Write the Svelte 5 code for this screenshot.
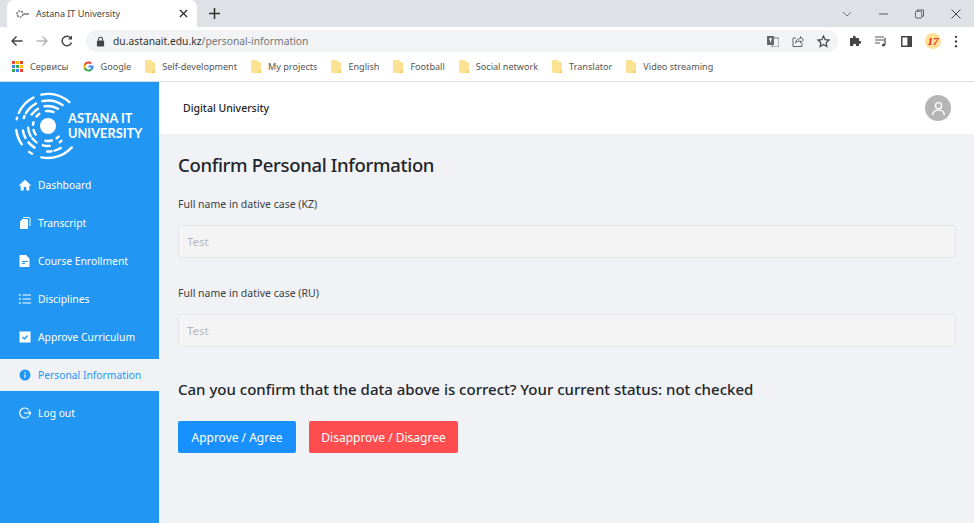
<script lang="ts">
	const bookmarks = ['Self-development', 'My projects', 'English', 'Football', 'Social network', 'Translator', 'Video streaming'];

	const nav = [
		{ label: 'Dashboard', icon: 'home' },
		{ label: 'Transcript', icon: 'copy' },
		{ label: 'Course Enrollment', icon: 'file' },
		{ label: 'Disciplines', icon: 'list' },
		{ label: 'Approve Curriculum', icon: 'check' },
		{ label: 'Personal Information', icon: 'info', active: true },
		{ label: 'Log out', icon: 'logout' }
	];

	const appsColors = ['#ea4335', '#fbbc04', '#ea4335', '#4285f4', '#34a853', '#fbbc04', '#34a853', '#4285f4', '#ea4335'];

	// logo arcs: radius, from, to (degrees clockwise from north)
	const logoArcs = [
		[32, -12, 42], [32, -66, -27], [32, -78, -75], [32, -125, -97], [32, -150, -144], [32, 132, 192],
		[25.5, -13, 35], [25.5, -60, -28], [25.5, -72, -67], [25.5, -118, -100], [25.5, -148, -130], [25.5, 150, 165], [25.5, 172, 182],
		[20, -10, 30], [20, -55, -30], [20, -120, -95], [20, -145, -128], [20, 138, 144], [20, 175, 195],
		[15, -8, 22], [15, -50, -35], [15, -85, -75], [15, -125, -105], [15, 135, 145], [15, 165, 190]
	];

	function arcPath(r: number, from: number, to: number) {
		const pt = (a: number) => {
			const t = (a * Math.PI) / 180;
			return `${(33 + r * Math.sin(t)).toFixed(2)} ${(35 - r * Math.cos(t)).toFixed(2)}`;
		};
		return `M${pt(from)}A${r} ${r} 0 0 1 ${pt(to)}`;
	}
</script>

<div class="window">
	<div class="tabstrip">
		<div class="tab">
			<svg class="favicon" viewBox="0 0 14 10" width="14" height="10"><circle cx="4" cy="5" r="3" fill="none" stroke="#777" stroke-width="1.6" stroke-dasharray="2 1"/><rect x="8" y="4" width="5" height="2" fill="#999"/></svg>
			<span class="tab-title">Astana IT University</span>
			<svg class="tab-close" viewBox="0 0 10 10" width="9" height="9"><path d="M1 1l8 8M9 1l-8 8" stroke="#333" stroke-width="1.5"/></svg>
		</div>
		<svg class="new-tab" viewBox="0 0 12 12" width="11" height="11"><path d="M6 0v12M0 6h12" stroke="#333" stroke-width="1.7"/></svg>
		<div class="win-controls">
			<svg viewBox="0 0 10 6" width="10" height="6"><path d="M1 1l4 4 4-4" fill="none" stroke="#777"/></svg>
			<svg viewBox="0 0 10 2" width="9" height="2"><path d="M0 1h10" stroke="#666" stroke-width="1.2"/></svg>
			<svg viewBox="0 0 10 10" width="9" height="10"><rect x="0.5" y="2" width="7" height="7.500" rx="1" fill="none" stroke="#555"/><path d="M2.500 2V.5h7v7H8" fill="none" stroke="#555"/></svg>
			<svg viewBox="0 0 10 10" width="10" height="10"><path d="M.5.5l9 9M9.500.5l-9 9" stroke="#444"/></svg>
		</div>
	</div>

	<div class="toolbar">
		<svg viewBox="0 0 12 12" width="12" height="12"><path d="M11.500 6H1M5.500 1.500L1 6l4.500 4.500" fill="none" stroke="#444" stroke-width="1.500"/></svg>
		<svg viewBox="0 0 12 12" width="12" height="12"><path d="M.5 6H11M6.500 1.500L11 6l-4.500 4.500" fill="none" stroke="#b4b6b9" stroke-width="1.500"/></svg>
		<svg viewBox="0 0 12 12" width="12" height="12"><path d="M10.500 7.500A4.800 4.800 0 1 1 9.600 2.800" fill="none" stroke="#444" stroke-width="1.500"/><path d="M11 .5v4H7z" fill="#444"/></svg>
		<div class="omnibox">
			<svg viewBox="0 0 10 12" width="9" height="11"><rect x="1" y="5" width="8" height="6.500" rx="1" fill="#444"/><path d="M2.800 5V3.500a2.200 2.200 0 0 1 4.400 0V5" fill="none" stroke="#444" stroke-width="1.200"/></svg>
			<span class="url">du.astanait.edu.kz<span class="path">/personal-information</span></span>
			<div class="omni-icons">
				<svg viewBox="0 0 12 12" width="12" height="12"><rect x="0" y="1" width="7" height="9" fill="#666"/><rect x="5" y="3" width="7" height="9" fill="none" stroke="#777"/><path d="M2 4h3M3.500 3v4" stroke="#fff"/></svg>
				<svg viewBox="0 0 12 12" width="12" height="12"><path d="M4 3H1v8.500h9V8" fill="none" stroke="#666"/><path d="M3.500 8c.5-3 2.500-4.500 5-4.500V1.500L11.500 5 8.500 8V6C6.500 6 5 6.500 3.500 8z" fill="none" stroke="#666"/></svg>
				<svg viewBox="0 0 12 12" width="13" height="13"><path d="M6 1l1.500 3.300 3.500.4-2.600 2.400.7 3.500L6 8.800l-3.100 1.800.7-3.500L1 4.700l3.500-.4z" fill="none" stroke="#444" stroke-width="1.100"/></svg>
			</div>
		</div>
		<div class="ext-icons">
			<svg viewBox="0 0 12 12" width="12" height="12"><path d="M1 3h3V2a1.300 1.300 0 0 1 2.700 0v1H10v3h1a1.300 1.300 0 0 1 0 2.700h-1V11H7V10a1.300 1.300 0 0 0-2.700 0v1H1z" fill="#444"/></svg>
			<svg viewBox="0 0 12 12" width="12" height="12"><path d="M0 2h9M0 5h9M0 8h5" stroke="#555" stroke-width="1.100"/><path d="M10 3v7" stroke="#444" stroke-width="1.200"/><circle cx="8.500" cy="10" r="1.500" fill="#444"/></svg>
			<svg viewBox="0 0 12 12" width="11" height="11"><rect x=".8" y=".8" width="10.400" height="10.400" fill="none" stroke="#444" stroke-width="1.600"/><rect x="7" y="1" width="4" height="10" fill="#444"/></svg>
			<span class="ext-badge">17</span>
			<svg viewBox="0 0 4 14" width="4" height="13"><circle cx="2" cy="2" r="1.300" fill="#444"/><circle cx="2" cy="7" r="1.300" fill="#444"/><circle cx="2" cy="12" r="1.300" fill="#444"/></svg>
		</div>
	</div>

	<div class="bookmarks">
		<span class="bm first">
			<span class="apps">{#each appsColors as c}<i style="background:{c}"></i>{/each}</span>
			Сервисы
		</span>
		<span class="bm">
			<svg viewBox="0 0 48 48" width="11" height="11"><path fill="#4285f4" d="M46 24c0-1.500-.1-3-.4-4.400H24v8.400h12.300c-.5 2.800-2.100 5.100-4.500 6.700v5.600h7.300C43.400 36.300 46 30.700 46 24z"/><path fill="#34a853" d="M24 46c6 0 11.100-2 14.800-5.400l-7.300-5.600c-2 1.400-4.600 2.200-7.500 2.200-5.800 0-10.700-3.900-12.400-9.100H4v5.800C7.700 41.100 15.300 46 24 46z"/><path fill="#fbbc04" d="M11.600 28.100c-.9-2.700-.9-5.500 0-8.200v-5.800H4c-3.100 6.200-3.100 13.600 0 19.800z"/><path fill="#ea4335" d="M24 10.800c3.200 0 6.100 1.100 8.400 3.300l6.300-6.300C34.900 4.200 29.800 2 24 2 15.300 2 7.700 6.900 4 14.100l7.600 5.800c1.700-5.200 6.600-9.100 12.400-9.100z"/></svg>
			Google
		</span>
		{#each bookmarks as b}
			<span class="bm">
				<svg class="folder" viewBox="0 0 10 13" width="10" height="13"><path d="M0 1a1 1 0 0 1 1-1h5l1 2h2a1 1 0 0 1 1 1v9a1 1 0 0 1-1 1H1a1 1 0 0 1-1-1z" fill="#fde293"/><path d="M7 13h2a1 1 0 0 0 1-1v-1H8z" fill="#f2c94c"/></svg>
				{b}
			</span>
		{/each}
	</div>

	<div class="app-body">
		<aside class="sidebar">
			<div class="logo">
				<svg class="logo-mark" viewBox="0 0 58 70" width="58" height="70">
					{#each logoArcs as [r, from, to]}
						<path d={arcPath(r, from, to)} fill="none" stroke="#fff" stroke-width="2.400" stroke-linecap="round" />
					{/each}
					<circle cx="33" cy="35" r="8" fill="#fff" />
				</svg>
				<div class="logo-text">ASTANA IT<br />UNIVERSITY</div>
			</div>
			<nav class="nav">
				{#each nav as item}
					<div class="nav-item" class:active={item.active}>
						<svg class="nav-icon" viewBox="0 0 12 12" width="12" height="12">
							{#if item.icon === 'home'}
								<path d="M6 .8L0 6.300l.7.700 1-.9V11.500h3V8h2.600v3.500h3V6.100l1 .9.700-.7z" fill="currentColor" />
							{:else if item.icon === 'copy'}
								<path d="M3.500 2h4.500a1 1 0 0 1 1 1v8a1 1 0 0 1-1 1H2a1 1 0 0 1-1-1V4.500z" fill="currentColor" />
								<path d="M4.500 1.200V.5h5.500a1 1 0 0 1 1 1v7.500" fill="none" stroke="currentColor" />
							{:else if item.icon === 'file'}
								<path fill-rule="evenodd" d="M1.500 0H7l3.500 3.500V11a1 1 0 0 1-1 1h-8a1 1 0 0 1-1-1V1a1 1 0 0 1 1-1zM3 6v1h6V6zM3 8v1h3V8z" fill="currentColor" />
							{:else if item.icon === 'list'}
								<path d="M3.500 2h8.500M3.500 6h8.500M3.500 10h8.500" stroke="currentColor" stroke-width="1" />
								<path d="M0 1.200h1.600v1.600H0zM0 5.200h1.600v1.600H0zM0 9.200h1.600v1.600H0z" fill="currentColor" />
							{:else if item.icon === 'check'}
								<rect x=".5" y=".5" width="11" height="11" fill="currentColor" />
								<path d="M3.500 6l2 2 3-3.500" fill="none" stroke="#2196f3" stroke-width="1.400" />
							{:else if item.icon === 'info'}
								<circle cx="6" cy="6" r="5.500" fill="currentColor" />
								<path d="M6 5.200v3.600M6 3v1.300" stroke="#f0f2f6" stroke-width="1.300" />
							{:else}
								<path d="M9.800 3A5 5 0 1 0 9.800 9" fill="none" stroke="currentColor" stroke-width="1.200" />
								<path d="M5 6h7M10 4l2 2-2 2" fill="none" stroke="currentColor" stroke-width="1.100" />
							{/if}
						</svg>
						<span>{item.label}</span>
					</div>
				{/each}
			</nav>
		</aside>

		<div class="page">
			<header class="topbar">
				<span class="brand">Digital University</span>
				<span class="avatar">
					<svg viewBox="0 0 16 16" width="15" height="15"><circle cx="8" cy="5" r="3.300" fill="none" stroke="#fff" stroke-width="1.500"/><path d="M1.800 15c0-3.500 2.800-5.300 6.200-5.300s6.200 1.800 6.200 5.300" fill="none" stroke="#fff" stroke-width="1.500"/></svg>
				</span>
			</header>
			<main class="content">
				<h1>Confirm Personal Information</h1>
				<label class="field">
					<span>Full name in dative case (KZ)</span>
					<input type="text" placeholder="Test" disabled />
				</label>
				<label class="field second">
					<span>Full name in dative case (RU)</span>
					<input type="text" placeholder="Test" disabled />
				</label>
				<h2>Can you confirm that the data above is correct? Your current status: not checked</h2>
				<div class="actions">
					<button class="btn approve">Approve / Agree</button>
					<button class="btn reject">Disapprove / Disagree</button>
				</div>
			</main>
		</div>
	</div>
</div>

<style>
	:global(body) {
		margin: 0;
		overflow: hidden;
	}

	.window {
		width: 974px;
		height: 523px;
		display: flex;
		flex-direction: column;
		font-family: "Noto Sans", "Open Sans", sans-serif;
		overflow: hidden;
		background: #fff;
	}

	.tabstrip {
		height: 27px;
		background: #dee1e6;
		display: flex;
		align-items: center;
		flex-shrink: 0;
	}

	.tab {
		width: 190px;
		height: 27px;
		margin-left: 7px;
		background: #fff;
		border-radius: 7px 7px 0 0;
		display: flex;
		align-items: center;
		box-sizing: border-box;
		padding: 0 9px 0 9px;
	}

	.favicon {
		margin-right: 6px;
	}

	.tab-title {
		font-size: 9px;
		color: #444;
		flex: 1;
	}

	.new-tab {
		margin-left: 12px;
	}

	.win-controls {
		margin-left: auto;
		display: flex;
		align-items: center;
		gap: 27px;
		padding-right: 13px;
	}

	.toolbar {
		height: 28px;
		display: flex;
		align-items: center;
		gap: 13px;
		padding-left: 11px;
		flex-shrink: 0;
	}

	.omnibox {
		width: 752px;
		height: 22px;
		border-radius: 11px;
		background: #f1f3f4;
		display: flex;
		align-items: center;
		padding-left: 10px;
		box-sizing: border-box;
		gap: 8px;
	}

	.url {
		font-size: 10.3px;
		color: #333;
	}

	.path {
		color: #777;
	}

	.omni-icons {
		margin-left: auto;
		display: flex;
		align-items: center;
		gap: 13px;
		padding-right: 8px;
	}

	.ext-icons {
		display: flex;
		align-items: center;
		gap: 14px;
		margin-left: -2px;
	}

	.ext-badge {
		width: 16px;
		height: 16px;
		border-radius: 50%;
		margin: 0 -1px;
		background: #fde293;
		color: #e8251b;
		font: italic bold 11px/16px "Liberation Serif", serif;
		text-align: center;
	}

	.bookmarks {
		height: 22px;
		padding: 0 0 4px 12px;
		display: flex;
		align-items: center;
		font-size: 9.1px;
		color: #555;
		gap: 14px;
		border-bottom: 1px solid #dadce0;
		flex-shrink: 0;
	}

	.bm {
		display: flex;
		align-items: center;
		gap: 7px;
		white-space: nowrap;
	}

	.apps {
		display: grid;
		grid-template-columns: repeat(3, 3px);
		gap: 1px;
	}

	.apps i {
		height: 3px;
		display: block;
	}

	.app-body {
		flex: 1;
		display: flex;
		min-height: 0;
	}

	.sidebar {
		width: 159px;
		background: #2196f3;
		color: #fff;
		flex-shrink: 0;
	}

	.logo {
		height: 87px;
		display: flex;
		align-items: center;
		padding-left: 15px;
	}

	.logo-mark {
		margin-right: -5px;
		overflow: visible;
	}

	.logo-text {
		font-family: Lato, sans-serif;
		font-weight: 700;
		font-size: 12.8px;
		line-height: 15px;
	}

	.nav {
		display: flex;
		flex-direction: column;
		gap: 6px;
	}

	.nav-item {
		height: 32px;
		display: flex;
		align-items: center;
		gap: 7px;
		padding-left: 19px;
		font-size: 10.3px;
		white-space: nowrap;
	}

	.nav-item.active {
		background: #f0f2f6;
		color: #2196f3;
	}

	.page {
		flex: 1;
		display: flex;
		flex-direction: column;
		background: #f0f2f6;
		min-width: 0;
	}

	.topbar {
		height: 52px;
		background: #fff;
		display: flex;
		align-items: center;
		justify-content: space-between;
		padding: 0 23px 0 24px;
		flex-shrink: 0;
	}

	.brand {
		font-size: 10.5px;
		font-weight: 500;
		color: #212529;
	}

	.avatar {
		width: 26px;
		height: 26px;
		border-radius: 50%;
		background: #b5b5b5;
		display: flex;
		align-items: center;
		justify-content: center;
	}

	.content {
		padding: 18px 18px 0 19px;
		color: #212529;
	}

	h1 {
		margin: 0 0 18px;
		font-size: 18.500px;
		letter-spacing: -0.33px;
		line-height: 26px;
		font-weight: 500;
	}

	.field {
		display: block;
	}

	.field span {
		display: block;
		font-size: 10.5px;
		line-height: 16px;
		margin-bottom: 13px;
		color: #3a3f44;
	}

	.field input {
		display: block;
		width: 100%;
		height: 33px;
		box-sizing: border-box;
		background: #f4f4f4;
		border: 1px solid #e4e6e8;
		border-radius: 3px;
		padding: 0 8px;
		font: inherit;
		font-size: 11.5px;
	}

	.field input::placeholder {
		color: #b5b7ba;
		opacity: 1;
	}

	.second {
		margin-top: 27px;
	}

	h2 {
		margin: 31px 0 0;
		font-size: 15px;
		line-height: 22px;
		font-weight: 500;
		white-space: nowrap;
	}

	.actions {
		display: flex;
		gap: 13px;
		margin-top: 21px;
	}

	.btn {
		height: 32px;
		border: 0;
		border-radius: 2px;
		color: #fff;
		font: inherit;
		font-size: 12px;
		padding: 0;
	}

	.approve {
		width: 118px;
		background: #1890ff;
	}

	.reject {
		width: 149px;
		background: #ff4d4f;
	}
</style>
